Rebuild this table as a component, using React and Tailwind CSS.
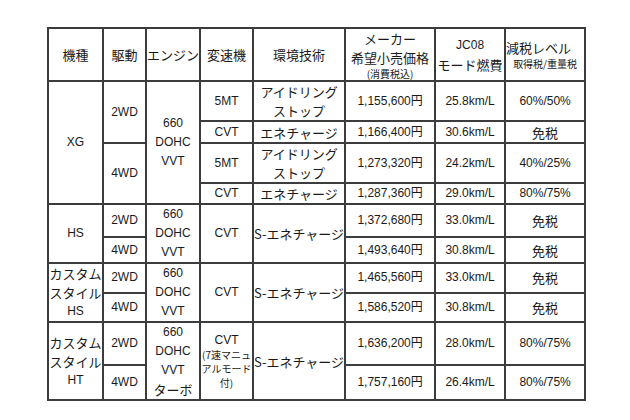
import React from 'react';

const td = 'border-2 border-[#3c3c3c] p-0 text-center align-middle';
const nw = 'whitespace-nowrap';
const lat = "text-[12px] font-['Liberation_Sans','Noto_Sans_CJK_JP',sans-serif]";

function Num({ children }) {
  return <td className={`${td} ${nw} ${lat}`}>{children}</td>;
}

export default function App() {
  return (
    <div className="min-h-[420px] w-[630px] bg-white pl-[47px] pt-[27px] font-['Noto_Sans_CJK_JP','Noto_Sans_CJK_SC',sans-serif] text-[13px] leading-[19px] text-[#1a1a1a]">
      <table className="table-fixed border-collapse">
        <colgroup>
          <col className="w-[55px]" />
          <col className="w-[43px]" />
          <col className="w-[54px]" />
          <col className="w-[53px]" />
          <col className="w-[90px]" />
          <col className="w-[90px]" />
          <col className="w-[70px]" />
          <col className="w-[80px]" />
        </colgroup>
        <thead>
          <tr className="h-[53px]">
            <th className={`${td} font-normal`}>機種</th>
            <th className={`${td} font-normal`}>駆動</th>
            <th className={`${td} ${nw} font-normal`}>エンジン</th>
            <th className={`${td} font-normal`}>変速機</th>
            <th className={`${td} font-normal`}>環境技術</th>
            <th className={`${td} ${nw} font-normal`}>
              <div className="leading-[19px]">メーカー</div>
              <div className="leading-[19px]">希望小売価格</div>
              <div className="text-[10px] leading-[13px]">(消費税込)</div>
            </th>
            <th className={`${td} ${nw} font-normal`}>
              <div className={`${lat} leading-[20px]`}>JC08</div>
              <div className="leading-[20px]">モード燃費</div>
            </th>
            <th className={`${td} ${nw} font-normal`}>
              <div className="text-left leading-[19px]">減税レベル</div>
              <div className="text-[10px] leading-[14px]">取得税/重量税</div>
            </th>
          </tr>
        </thead>
        <tbody>
          <tr className="h-[39px]">
            <td className={`${td} ${lat}`} rowSpan={4}>XG</td>
            <td className={`${td} ${lat}`} rowSpan={2}>2WD</td>
            <td className={`${td} ${lat}`} rowSpan={4}>660<br />DOHC<br />VVT</td>
            <td className={`${td} ${lat}`}>5MT</td>
            <td className={`${td} ${nw}`}>アイドリング<br />ストップ</td>
            <Num>1,155,600円</Num>
            <Num>25.8km/L</Num>
            <Num>60%/50%</Num>
          </tr>
          <tr className="h-[22px]">
            <td className={`${td} ${lat}`}>CVT</td>
            <td className={`${td} ${nw}`}>エネチャージ</td>
            <Num>1,166,400円</Num>
            <Num>30.6km/L</Num>
            <td className={td}>免税</td>
          </tr>
          <tr className="h-[40px]">
            <td className={`${td} ${lat}`} rowSpan={2}>4WD</td>
            <td className={`${td} ${lat}`}>5MT</td>
            <td className={`${td} ${nw}`}>アイドリング<br />ストップ</td>
            <Num>1,273,320円</Num>
            <Num>24.2km/L</Num>
            <Num>40%/25%</Num>
          </tr>
          <tr className="h-[21px]">
            <td className={`${td} ${lat}`}>CVT</td>
            <td className={`${td} ${nw}`}>エネチャージ</td>
            <Num>1,287,360円</Num>
            <Num>29.0km/L</Num>
            <Num>80%/75%</Num>
          </tr>

          <tr className="h-[33px]">
            <td className={`${td} ${lat}`} rowSpan={2}>HS</td>
            <td className={`${td} ${lat}`}>2WD</td>
            <td className={`${td} ${lat}`} rowSpan={2}>660<br />DOHC<br />VVT</td>
            <td className={`${td} ${lat}`} rowSpan={2}>CVT</td>
            <td className={`${td} ${nw}`} rowSpan={2}>S-エネチャージ</td>
            <Num>1,372,680円</Num>
            <Num>33.0km/L</Num>
            <td className={td}>免税</td>
          </tr>
          <tr className="h-[26px]">
            <td className={`${td} ${lat}`}>4WD</td>
            <Num>1,493,640円</Num>
            <Num>30.8km/L</Num>
            <td className={td}>免税</td>
          </tr>

          <tr className="h-[29px]">
            <td className={`${td} ${nw}`} rowSpan={2}>
              <div>カスタム</div>
              <div>スタイル</div>
              <div className={lat}>HS</div>
            </td>
            <td className={`${td} ${lat}`}>2WD</td>
            <td className={`${td} ${lat}`} rowSpan={2}>660<br />DOHC<br />VVT</td>
            <td className={`${td} ${lat}`} rowSpan={2}>CVT</td>
            <td className={`${td} ${nw}`} rowSpan={2}>S-エネチャージ</td>
            <Num>1,465,560円</Num>
            <Num>33.0km/L</Num>
            <td className={td}>免税</td>
          </tr>
          <tr className="h-[29px]">
            <td className={`${td} ${lat}`}>4WD</td>
            <Num>1,586,520円</Num>
            <Num>30.8km/L</Num>
            <td className={td}>免税</td>
          </tr>

          <tr className="h-[43px]">
            <td className={`${td} ${nw}`} rowSpan={2}>
              <div>カスタム</div>
              <div>スタイル</div>
              <div className={lat}>HT</div>
            </td>
            <td className={`${td} ${lat}`}>2WD</td>
            <td className={`${td} leading-[19px]`} rowSpan={2}>
              <div className={lat}>660</div>
              <div className={lat}>DOHC</div>
              <div className={lat}>VVT</div>
              <div>ターボ</div>
            </td>
            <td className={`${td} ${nw}`} rowSpan={2}>
              <div className="flex flex-col items-center">
                <div className={`${lat} h-[16px] leading-[16px]`}>CVT</div>
                <div className="h-[14px] text-[10px] leading-[14px]">(7速マニュ</div>
                <div className="h-[14px] text-[10px] leading-[14px]">アルモード</div>
                <div className="h-[14px] text-[10px] leading-[14px]">付)</div>
              </div>
            </td>
            <td className={`${td} ${nw}`} rowSpan={2}>S-エネチャージ</td>
            <Num>1,636,200円</Num>
            <Num>28.0km/L</Num>
            <Num>80%/75%</Num>
          </tr>
          <tr className="h-[35px]">
            <td className={`${td} ${lat}`}>4WD</td>
            <Num>1,757,160円</Num>
            <Num>26.4km/L</Num>
            <Num>80%/75%</Num>
          </tr>
        </tbody>
      </table>
    </div>
  );
}
